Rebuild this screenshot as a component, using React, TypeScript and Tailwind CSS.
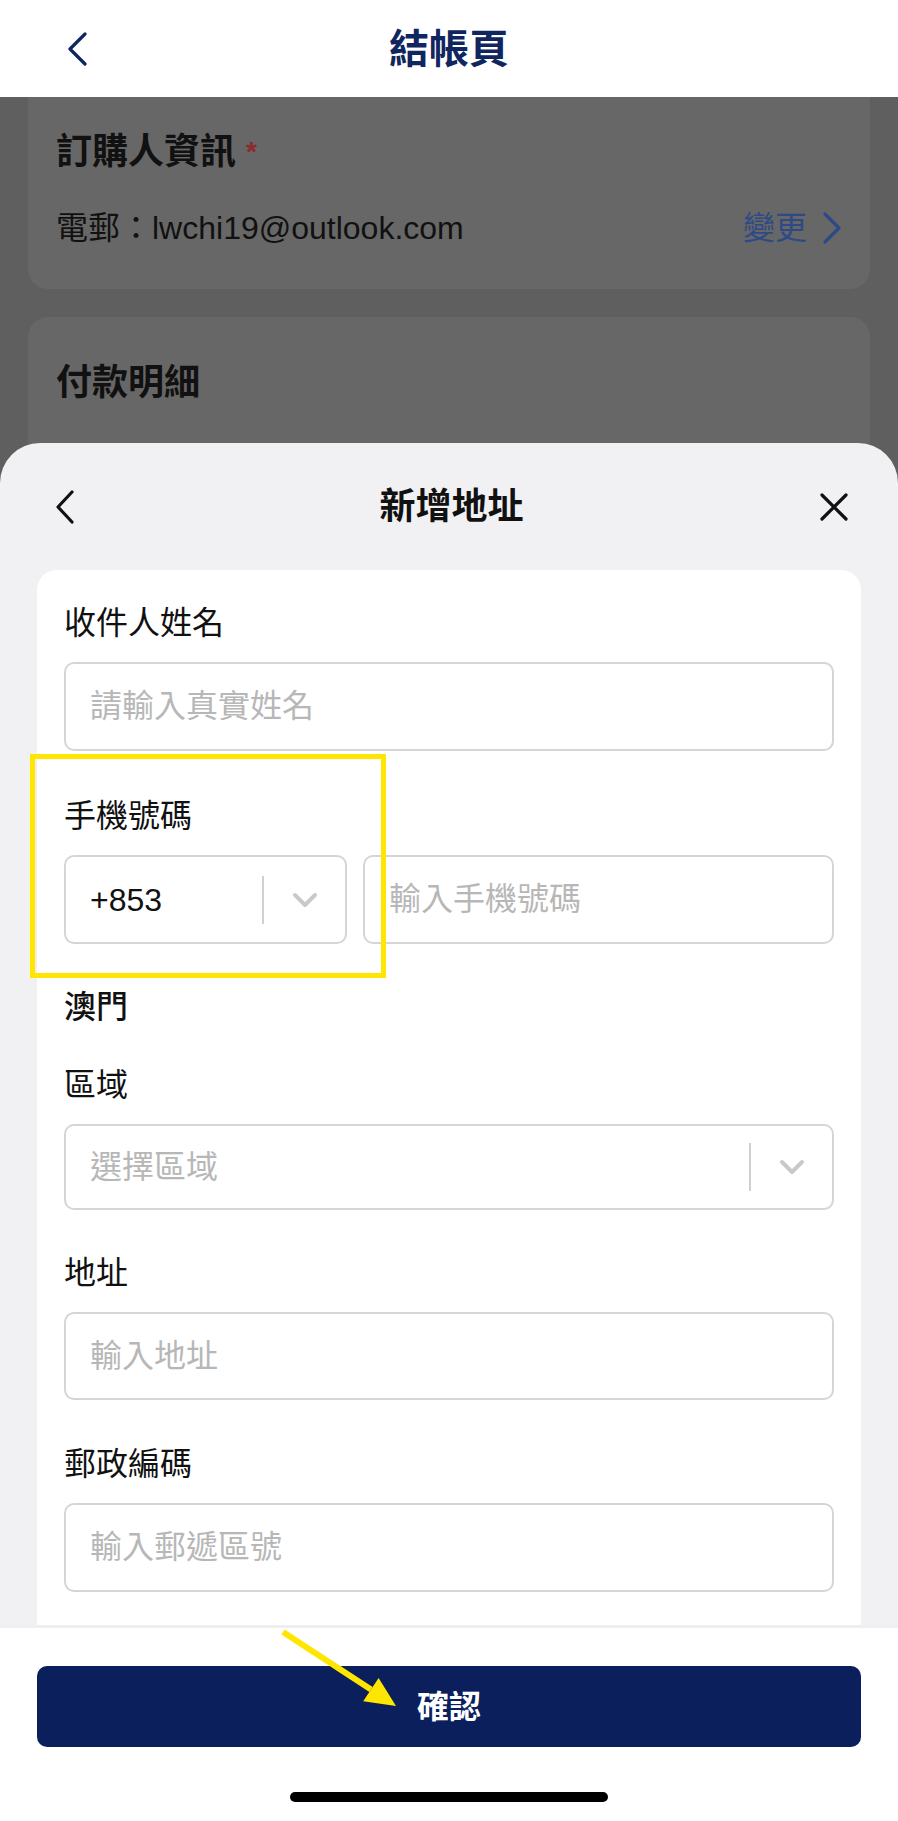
import type { ReactNode } from "react";

function ChevronDown() {
  return (
    <svg width="26" height="16" viewBox="0 0 26 16" fill="none">
      <path d="M3 3 L13 13 L23 3" stroke="#c9c9c9" strokeWidth="4" strokeLinecap="round" strokeLinejoin="round" />
    </svg>
  );
}

function Label({ children, className = "" }: { children: ReactNode; className?: string }) {
  return <div className={`h-[46px] leading-[46px] text-[32px] text-[#111] ${className}`}>{children}</div>;
}

function TextField({ placeholder, className = "" }: { placeholder: string; className?: string }) {
  return (
    <input
      readOnly
      placeholder={placeholder}
      className={`w-full rounded-[10px] border-2 border-[#d5d5d5] bg-white px-[24px] text-[32px] text-[#111] outline-none placeholder:text-[#b7b7b7] ${className}`}
    />
  );
}

function SelectBox({ value, placeholder, className = "" }: { value?: string; placeholder?: string; className?: string }) {
  return (
    <div className={`flex items-center rounded-[10px] border-2 border-[#d5d5d5] bg-white ${className}`}>
      <div className={`flex-1 pl-[24px] text-[32px] ${value ? "text-[#111]" : "text-[#b7b7b7]"}`}>{value ?? placeholder}</div>
      <div className="h-[48px] w-[2px] bg-[#d0d0d0]" />
      <div className="flex w-[81px] items-center justify-center">
        <ChevronDown />
      </div>
    </div>
  );
}

export default function App() {
  return (
    <div className="relative h-[1821px] w-[898px] overflow-hidden bg-[#5f5f5f] font-['Liberation_Sans','Noto_Sans_CJK_TC',sans-serif]">
      {/* top bar */}
      <header className="flex h-[97px] items-center bg-white px-[64px]">
        <svg width="24" height="34" viewBox="0 0 24 34" fill="none">
          <path d="M21 2 L6 17 L21 32" stroke="#10265f" strokeWidth="3.2" strokeLinecap="round" strokeLinejoin="round" />
        </svg>
        <h1 className="flex-1 text-center text-[40px] font-bold text-[#10265f]">結帳頁</h1>
        <div className="w-[24px]" />
      </header>

      {/* dimmed checkout page */}
      <div className="flex flex-col px-[28px]">
        <div className="h-[192px] rounded-b-[20px] bg-[#676767] px-[28px] pt-[32px]">
          <div className="h-[45px] leading-[45px] text-[36px] font-bold text-[#111]">
            訂購人資訊 <span className="align-top text-[28px] text-[#8a2c2c]">*</span>
          </div>
          <div className="mt-[34px] flex h-[40px] items-center justify-between">
            <span className="text-[32px] text-[#111]">電郵：lwchi19@outlook.com</span>
            <div className="flex items-center gap-[15px]">
              <span className="text-[32px] text-[#2e4a86]">變更</span>
              <svg width="20" height="32" viewBox="0 0 20 32" fill="none">
                <path d="M3 2 L17 16 L3 30" stroke="#2e4a86" strokeWidth="3.2" strokeLinecap="round" strokeLinejoin="round" />
              </svg>
            </div>
          </div>
        </div>
        <div className="mt-[28px] h-[300px] rounded-[20px] bg-[#676767] px-[28px] pt-[43px]">
          <div className="h-[45px] leading-[45px] text-[36px] font-bold text-[#111]">付款明細</div>
        </div>
      </div>

      {/* bottom sheet */}
      <div className="absolute inset-x-0 bottom-0 top-[443px] flex flex-col overflow-hidden rounded-t-[40px] bg-[#f1f1f3]">
        <div className="grid h-[127px] grid-cols-[1fr_auto_1fr] items-center pl-[55px] pr-[50px]">
          <svg width="20" height="34" viewBox="0 0 20 34" fill="none" className="justify-self-start">
            <path d="M17 2 L3 17 L17 32" stroke="#111" strokeWidth="3.2" strokeLinecap="round" strokeLinejoin="round" />
          </svg>
          <div className="text-[36px] font-semibold text-[#111]">新增地址</div>
          <svg width="28" height="28" viewBox="0 0 28 28" fill="none" className="justify-self-end">
            <path d="M2 2 L26 26 M26 2 L2 26" stroke="#111" strokeWidth="3.2" strokeLinecap="round" />
          </svg>
        </div>

        <div className="flex-1 overflow-hidden px-[37px]">
          <div className="rounded-t-[20px] bg-white px-[27px] pb-[40px] pt-[30px]">
            <Label className="mb-[16px]">收件人姓名</Label>
            <TextField placeholder="請輸入真實姓名" className="h-[89px]" />

            <Label className="mb-[16px] mt-[42px]">手機號碼</Label>
            <div className="flex h-[89px] gap-[16px]">
              <SelectBox value="+853" className="w-[283px]" />
              <TextField placeholder="輸入手機號碼" className="h-[89px] flex-1" />
            </div>

            <Label className="mt-[40px] font-medium">澳門</Label>

            <Label className="mb-[16px] mt-[32px]">區域</Label>
            <SelectBox placeholder="選擇區域" className="h-[86px]" />

            <Label className="mb-[16px] mt-[40px]">地址</Label>
            <TextField placeholder="輸入地址" className="h-[88px]" />

            <Label className="mb-[16px] mt-[41px]">郵政編碼</Label>
            <TextField placeholder="輸入郵遞區號" className="h-[89px]" />
          </div>
        </div>

        <div className="flex h-[196px] flex-col items-center border-t-[3px] border-[#efeff1] bg-white px-[37px] pt-[38px]">
          <button className="h-[81px] w-full rounded-[10px] bg-[#0a1f5c] text-[32px] font-bold text-white">確認</button>
          <div className="mt-[45px] h-[10px] w-[318px] rounded-full bg-black" />
        </div>
      </div>

      {/* annotation: highlight box */}
      <div className="pointer-events-none absolute left-[30px] top-[754px] z-10 h-[224px] w-[356px] border-[5px] border-[#ffe600]" />

      {/* annotation: arrow to confirm */}
      <svg className="pointer-events-none absolute left-[270px] top-[1620px] z-10" width="140" height="100" viewBox="0 0 140 100" fill="none">
        <line x1="13" y1="12" x2="101" y2="69.6" stroke="#ffe600" strokeWidth="6" />
        <polygon points="126,86 93.2,81.3 108.6,57.9" fill="#ffe600" />
      </svg>
    </div>
  );
}
